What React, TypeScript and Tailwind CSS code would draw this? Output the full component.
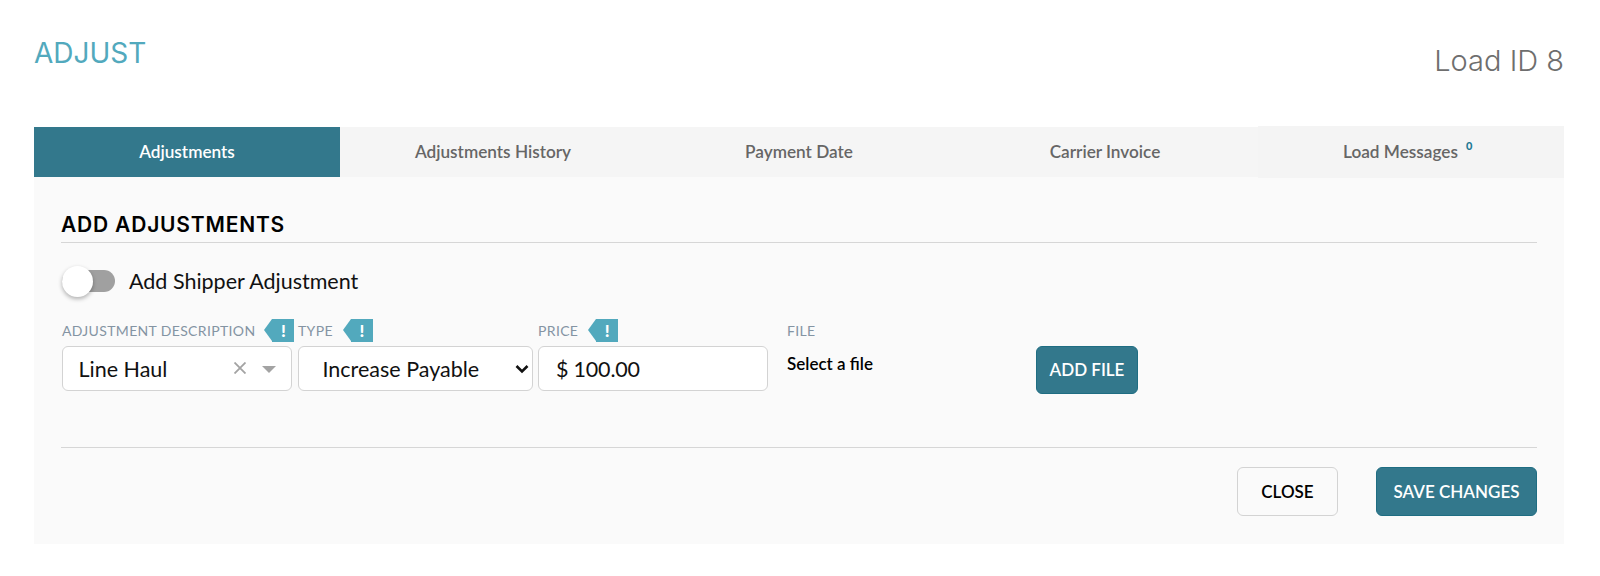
import React from "react";

const lato = "font-['Lato','Liberation_Sans',sans-serif]";
const heading = "font-['Inter','Open_Sans',sans-serif]";

const tabs = ["Adjustments", "Adjustments History", "Payment Date", "Carrier Invoice"];

const Flag = () => (
  <span className="flex items-center h-[23px]">
    <span className="w-0 h-0 border-y-[11.5px] border-y-transparent border-r-[8px] border-r-[#52a9bd]" />
    <span className="w-[22px] h-[23px] bg-[#52a9bd] text-white text-[17px] font-black leading-[23px] text-center">!</span>
  </span>
);

const Label = ({ children }: { children: React.ReactNode }) => (
  <span className="text-[14px] leading-none text-[#8494a3] tracking-[0.35px] mt-[2px]">{children}</span>
);

const fieldBox = "h-[45px] bg-white border-[1.5px] border-[#d3d3d3] rounded-[6px] flex items-center text-[21.5px] text-[#111]";

export default function App() {
  return (
    <div className={`${lato} w-[1600px] h-[576px] bg-white pl-[34px] pt-[37px]`}>
      <div className="flex justify-between w-[1530px] h-[90px]">
        <h1 className={`${heading} text-[28px] leading-[32px] text-[#52a9bd] font-normal`}>ADJUST</h1>
        <span className={`${heading} text-[29px] leading-[32px] mt-[8px] text-[#6e6e6e] font-light`}>Load ID 8</span>
      </div>
      <div className="bg-[#fafafa] h-[417px] w-[1530px]">
        <div className="flex items-center h-[50px] bg-[#f5f5f5] text-[17.2px] font-semibold">
          {tabs.map((t, i) => (
            <div
              key={t}
              className={
                i === 0
                  ? "w-[306px] h-[50px] flex items-center justify-center bg-[#33788c] text-white"
                  : "w-[306px] h-[50px] flex items-center justify-center text-[#666]"
              }
            >
              {t}
            </div>
          ))}
          <div className="w-[306px] h-[52px] flex items-center justify-center bg-[#f4f4f4] text-[#666]">
            <span>Load Messages</span>
            <span className="w-[21px] pl-[8px] -mt-[14px] text-[11px] leading-none text-[#1f7a94] font-black">0</span>
          </div>
        </div>
        <div className="px-[27px]">
          <h2 className={`${heading} text-[21px] font-semibold text-black leading-[24px] tracking-[0.8px] mt-[36px] pb-[5px] border-b border-[#d6d6d6]`}>
            ADD ADJUSTMENTS
          </h2>
          <div className="flex items-center gap-[14px] mt-[22px] ml-[1px] h-[32px]">
            <div className="relative w-[53px] h-[22px] bg-[#a0a0a0] rounded-full">
              <span className="absolute left-0 top-[-4.5px] w-[31px] h-[31px] rounded-full bg-white shadow-[0_2px_4px_rgba(0,0,0,0.3)]" />
            </div>
            <span className="text-[21.5px] text-[#111]">Add Shipper Adjustment</span>
          </div>
          <div className="flex mt-[21px] ml-[1px]">
            <div className="w-[236px] flex flex-col">
              <div className="flex items-center gap-[9px] h-[24px] mb-[4px]">
                <Label>ADJUSTMENT DESCRIPTION</Label>
                <Flag />
              </div>
              <div className={`${fieldBox} w-[230px] pl-[15.5px] pr-[15.5px]`}>
                <span className="flex-1 pt-[2px]">Line Haul</span>
                <svg width="12" height="12" viewBox="0 0 12 12" className="mr-[16px] -mt-[2px]">
                  <path d="M.5.5 11.5 11.5M11.5.5.5 11.5" stroke="#a3a3a3" strokeWidth="1.8" />
                </svg>
                <svg width="14" height="7" viewBox="0 0 14 7" className="mt-[1px]">
                  <path d="M0 0H14L7 7Z" fill="#a3a3a3" />
                </svg>
              </div>
            </div>
            <div className="w-[240px] flex flex-col">
              <div className="flex items-center gap-[10px] h-[24px] mb-[4px]">
                <Label>TYPE</Label>
                <Flag />
              </div>
              <div className={`${fieldBox} w-[235px] pl-[23.5px] pr-[3.5px]`}>
                <span className="flex-1 pt-[2px]">Increase Payable</span>
                <svg width="14" height="10" viewBox="0 0 14 10">
                  <path d="M1.5 2 7 7.5 12.5 2" stroke="#111" strokeWidth="2.6" fill="none" />
                </svg>
              </div>
            </div>
            <div className="w-[249px] flex flex-col">
              <div className="flex items-center gap-[10px] h-[24px] mb-[4px]">
                <Label>PRICE</Label>
                <Flag />
              </div>
              <div className={`${fieldBox} w-[230px] pl-[17px] pt-[2px] tracking-[-0.2px]`}>$ 100.00</div>
            </div>
            <div className="w-[249px] flex flex-col">
              <div className="flex items-center h-[24px] mb-[4px]">
                <Label>FILE</Label>
              </div>
              <span className="text-[17px] font-semibold text-black leading-[20px] mt-[8px]">Select a file</span>
            </div>
            <button className="mt-[28px] w-[102px] h-[48px] bg-[#33788c] border border-[#1f6d82] rounded-[6px] text-white text-[17px] font-semibold">
              ADD FILE
            </button>
          </div>
          <div className="border-t border-[#d6d6d6] mt-[53px] pt-[19px] flex justify-end gap-[38px]">
            <button className="w-[101px] h-[49px] border-[1.5px] border-[#d3d3d3] rounded-[6px] bg-[#fafafa] text-black text-[17px] font-semibold">
              CLOSE
            </button>
            <button className="w-[161px] h-[49px] bg-[#33788c] border border-[#1f6d82] rounded-[6px] text-white text-[17px] font-semibold">
              SAVE CHANGES
            </button>
          </div>
        </div>
      </div>
    </div>
  );
}
